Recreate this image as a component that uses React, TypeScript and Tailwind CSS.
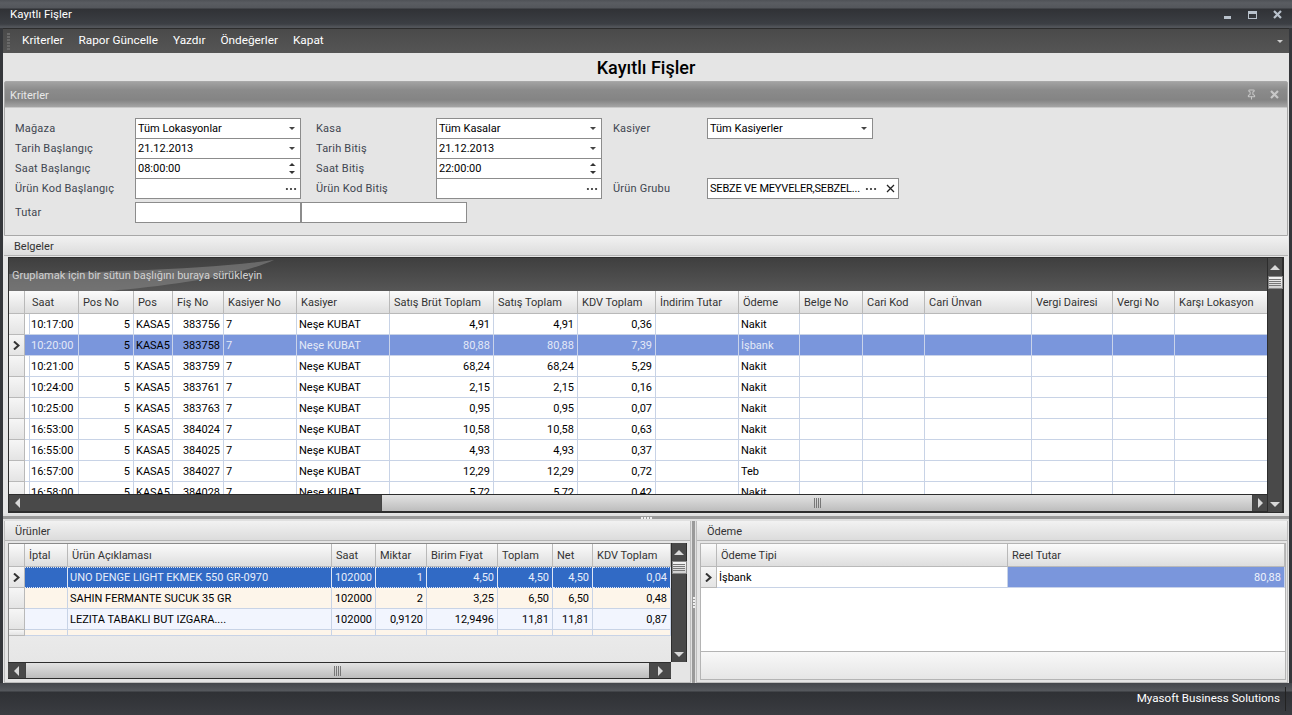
import { Ellipsis, Pin } from 'lucide-react'

const font = "font-['Roboto',sans-serif]"

const topCols = ['Saat', 'Pos No', 'Pos', 'Fiş No', 'Kasiyer No', 'Kasiyer', 'Satış Brüt Toplam', 'Satış Toplam', 'KDV Toplam', 'İndirim Tutar', 'Ödeme', 'Belge No', 'Cari Kod', 'Cari Ünvan', 'Vergi Dairesi', 'Vergi No', 'Karşı Lokasyon']
const topGrid = 'grid grid-cols-[16px_3px_51px_55px_39px_51px_73px_93px_104px_84px_78px_83px_61px_63px_62px_107px_81px_62px_93px]'

const topRows = [
  ['10:17:00', '383756', '4,91', '4,91', '0,36', 'Nakit'],
  ['10:20:00', '383758', '80,88', '80,88', '7,39', 'İşbank'],
  ['10:21:00', '383759', '68,24', '68,24', '5,29', 'Nakit'],
  ['10:24:00', '383761', '2,15', '2,15', '0,16', 'Nakit'],
  ['10:25:00', '383763', '0,95', '0,95', '0,07', 'Nakit'],
  ['16:53:00', '384024', '10,58', '10,58', '0,63', 'Nakit'],
  ['16:55:00', '384025', '4,93', '4,93', '0,37', 'Nakit'],
  ['16:57:00', '384027', '12,29', '12,29', '0,72', 'Teb'],
  ['16:58:00', '384028', '5,72', '5,72', '0,42', 'Nakit'],
]

const bottomCols = ['İptal', 'Ürün Açıklaması', 'Saat', 'Miktar', 'Birim Fiyat', 'Toplam', 'Net', 'KDV Toplam']
const bottomGrid = 'grid grid-cols-[16px_43px_264px_44px_51px_71px_55px_40px_78px]'

const bottomRows = [
  ['UNO DENGE LIGHT EKMEK 550 GR-0970', '102000', '1', '4,50', '4,50', '4,50', '0,04'],
  ['SAHIN FERMANTE SUCUK 35 GR', '102000', '2', '3,25', '6,50', '6,50', '0,48'],
  ['LEZITA TABAKLI BUT IZGARA....', '102000', '0,9120', '12,9496', '11,81', '11,81', '0,87'],
]

function Cross({ className = '', weight = 2.2 }: { className?: string; weight?: number }) {
  return (
    <svg width="9" height="9" viewBox="0 0 9 9" className={className}>
      <path d="M1 1L8 8M8 1L1 8" stroke="currentColor" strokeWidth={weight} fill="none" />
    </svg>
  )
}

function Caret() {
  return <span className="ml-auto mr-[5px] w-0 h-0 border-x-[3px] border-x-transparent border-t-[3px] border-t-[#444]" />
}

function Spin() {
  return (
    <span className="ml-auto mr-[5px] flex flex-col gap-[5px]">
      <span className="w-0 h-0 border-x-[3px] border-x-transparent border-b-[3px] border-b-[#333]" />
      <span className="w-0 h-0 border-x-[3px] border-x-transparent border-t-[3px] border-t-[#333]" />
    </span>
  )
}

function Dots() {
  return <Ellipsis size={14} strokeWidth={1.8} className="ml-auto mr-[2px] text-[#333] shrink-0" />
}

function Field({ value, width = 'w-[166px]', children }: { value?: string; width?: string; children?: React.ReactNode }) {
  return (
    <div className={`${width} h-[21px] -mb-px bg-white border border-[#8c8c8c] flex items-center pl-[2px] text-[11px] text-black shrink-0 whitespace-nowrap overflow-hidden`}>
      <span className="pt-px">{value}</span>
      {children}
    </div>
  )
}

function Label({ text, width }: { text: string; width: string }) {
  return <span className={`${width} pt-[3px] text-[11px] tracking-[0.2px] text-[#3f4650] shrink-0`}>{text}</span>
}

function TabHead({ text }: { text: string }) {
  return (
    <div className="h-[20px] shrink-0 flex items-center pl-[10px] pt-[3px] text-[11px] text-[#333] border-b border-[#b4b4b4] bg-gradient-to-b from-[#f2f2f2] to-[#dcdcdc]">
      {text}
    </div>
  )
}

function HeaderCell({ text }: { text?: string }) {
  return (
    <div className="h-[23px] flex items-center pl-[4px] pt-[2px] text-[11px] text-[#333] whitespace-nowrap overflow-hidden border-r border-b border-[#b9b9b9] bg-gradient-to-b from-[#fbfbfb] to-[#dedede]">
      {text}
    </div>
  )
}

function Indicator({ active, h = 'h-[21px]' }: { active?: boolean; h?: string }) {
  return (
    <div className={`${h} flex items-center justify-center border-r border-b border-[#b9b9b9] bg-gradient-to-b from-[#f6f6f6] to-[#e4e4e4]`}>
      {active && (
        <svg width="7" height="9" viewBox="0 0 7 9">
          <path d="M1 0.5 L5.5 4.5 L1 8.5" fill="none" stroke="#333" strokeWidth="2" />
        </svg>
      )}
    </div>
  )
}

function Cell({ text, right, className = '' }: { text?: string; right?: boolean; className?: string }) {
  return (
    <div className={`h-[21px] flex items-center px-[2px] pt-[2px] text-[11px] whitespace-nowrap overflow-hidden border-r border-b border-[#c8d3e6] ${right ? 'justify-end pr-[3px]' : ''} ${className}`}>
      {text}
    </div>
  )
}

function Grip({ vertical }: { vertical?: boolean }) {
  return (
    <span className={`flex gap-px ${vertical ? 'flex-col' : ''}`}>
      {[0, 1, 2, 3].map((i) => (
        <span key={i} className={vertical ? 'w-[12px] h-px bg-[#777]' : 'w-px h-[10px] bg-[#777]'} />
      ))}
    </span>
  )
}

function Arrow({ dir }: { dir: 'up' | 'down' | 'left' | 'right' }) {
  if (dir === 'up') return <span className="w-0 h-0 border-x-[5px] border-x-transparent border-b-[5px] border-b-[#d8d8d8]" />
  if (dir === 'down') return <span className="w-0 h-0 border-x-[5px] border-x-transparent border-t-[5px] border-t-[#d8d8d8]" />
  if (dir === 'left') return <span className="w-0 h-0 border-y-[5px] border-y-transparent border-r-[5px] border-r-[#d8d8d8]" />
  return <span className="w-0 h-0 border-y-[5px] border-y-transparent border-l-[5px] border-l-[#d8d8d8]" />
}

function VScroll() {
  return (
    <div className="w-[16px] shrink-0 bg-[#494949] border-x border-[#2d2d2d] flex flex-col items-center">
      <div className="h-[18px] shrink-0 flex items-center justify-center"><Arrow dir="up" /></div>
      <div className="w-[15px] h-[13px] shrink-0 flex items-center justify-center bg-gradient-to-b from-[#f5f5f5] to-[#cfcfcf] border border-[#888]">
        <Grip vertical />
      </div>
      <div className="flex-1" />
      <div className="h-[16px] shrink-0 flex items-center justify-center"><Arrow dir="down" /></div>
    </div>
  )
}

function TopHScroll() {
  return (
    <div className="h-[18px] shrink-0 flex bg-[#494949] border-y border-[#2d2d2d]">
      <div className="w-[16px] flex items-center justify-center"><Arrow dir="left" /></div>
      <div className="w-[356px]" />
      <div className="w-[872px] flex items-center justify-center bg-gradient-to-b from-[#e2e2e2] to-[#bdbdbd] border-x border-[#444]"><Grip /></div>
      <div className="flex-1 flex items-center justify-center"><Arrow dir="right" /></div>
    </div>
  )
}

function BottomHScroll() {
  return (
    <div className="h-[17px] w-[663px] shrink-0 flex bg-[#494949] border-y border-[#2d2d2d]">
      <div className="w-[17px] flex items-center justify-center"><Arrow dir="left" /></div>
      <div className="w-[625px] flex items-center justify-center bg-gradient-to-b from-[#e2e2e2] to-[#bdbdbd] border-x border-[#444]"><Grip /></div>
      <div className="flex-1 flex items-center justify-center"><Arrow dir="right" /></div>
    </div>
  )
}

export default function App() {
  return (
    <div className={`${font} w-[1292px] h-[715px] overflow-hidden flex flex-col bg-[#35373b]`}>
      {/* title bar */}
      <div className="h-[28px] shrink-0 flex items-center pl-[10px] pr-[10px] bg-[linear-gradient(#4f5257_0,#5a5d62_3px,#53565b_8px,#303236_9px,#3c3f44_24px,#52555a_27px)]">
        <span className="text-[11.5px] text-white mt-[2px]">Kayıtlı Fişler</span>
        <div className="ml-auto flex items-start text-[#b9c2cc]">
          <span className="w-[7px] h-[3px] mt-[6px] mr-[17px] bg-[#b9c2cc]" />
          <span className="w-[9px] h-[8px] mt-px mr-[16px] border border-t-[3px] border-[#b9c2cc]" />
          <Cross />
        </div>
      </div>

      <div className="flex-1 min-h-0 flex flex-col mx-[3px] bg-[#e5e5e5]">
        {/* toolbar */}
        <div className="h-[25px] shrink-0 flex items-center pl-[4px] pr-[6px] bg-gradient-to-b from-[#4a4a4a] to-[#555] border-t border-[#2d2d2d]">
          <span className="flex flex-col gap-px mr-[12px]">
            {[0, 1, 2, 3, 4, 5].map((i) => <span key={i} className="w-[3px] h-[2px] bg-[#6a6a6a]" />)}
          </span>
          <div className="flex gap-[15px] text-[11.8px] text-white">
            <span>Kriterler</span>
            <span>Rapor Güncelle</span>
            <span>Yazdır</span>
            <span>Öndeğerler</span>
            <span>Kapat</span>
          </div>
          <span className="ml-auto w-0 h-0 border-x-[3px] border-x-transparent border-t-[3px] border-t-[#ccc]" />
        </div>

        <div className="h-[28px] shrink-0 flex items-center justify-center text-[18px] font-medium text-black">Kayıtlı Fişler</div>

        {/* criteria */}
        <div className="h-[155px] shrink-0 mx-px border border-[#a8a8a8] rounded-t-[2px] flex flex-col">
          <div className="h-[26px] shrink-0 flex items-center pl-[5px] pr-[8px] text-[11px] text-[#e8e8e8] bg-[linear-gradient(#a2a2a2_0,#8b8b8b_8px,#848484_18px,#a5a5a5_25px)] border-b border-[#c8c8c8]">
            <span className="pt-[3px]">Kriterler</span>
            <Pin size={11} strokeWidth={2.2} className="ml-auto text-[#c8c8c8] mr-[13px]" />
            <Cross className="text-[#c8c8c8]" />
          </div>
          <div className="pl-[10px] pt-[10px] flex flex-col">
            <div className="flex items-center">
              <Label text="Mağaza" width="w-[120px]" />
              <Field value="Tüm Lokasyonlar"><Caret /></Field>
              <div className="w-[15px] shrink-0" />
              <Label text="Kasa" width="w-[120px]" />
              <Field value="Tüm Kasalar"><Caret /></Field>
              <div className="w-[11px] shrink-0" />
              <Label text="Kasiyer" width="w-[94px]" />
              <Field value="Tüm Kasiyerler"><Caret /></Field>
            </div>
            <div className="flex items-center">
              <Label text="Tarih Başlangıç" width="w-[120px]" />
              <Field value="21.12.2013"><Caret /></Field>
              <div className="w-[15px] shrink-0" />
              <Label text="Tarih Bitiş" width="w-[120px]" />
              <Field value="21.12.2013"><Caret /></Field>
            </div>
            <div className="flex items-center">
              <Label text="Saat Başlangıç" width="w-[120px]" />
              <Field value="08:00:00"><Spin /></Field>
              <div className="w-[15px] shrink-0" />
              <Label text="Saat Bitiş" width="w-[120px]" />
              <Field value="22:00:00"><Spin /></Field>
            </div>
            <div className="flex items-center">
              <Label text="Ürün Kod Başlangıç" width="w-[120px]" />
              <Field><Dots /></Field>
              <div className="w-[15px] shrink-0" />
              <Label text="Ürün Kod Bitiş" width="w-[120px]" />
              <Field><Dots /></Field>
              <div className="w-[11px] shrink-0" />
              <Label text="Ürün Grubu" width="w-[94px]" />
              <Field value="SEBZE VE MEYVELER,SEBZEL..." width="w-[192px] tracking-[-0.2px]">
                <Dots />
                <Cross weight={1.3} className="ml-[6px] mr-[3px] text-[#222] shrink-0" />
              </Field>
            </div>
            <div className="flex items-center mt-[4px]">
              <Label text="Tutar" width="w-[120px]" />
              <Field />
              <Field />
            </div>
          </div>
        </div>

        {/* documents grid */}
        <div className="h-[278px] shrink-0 mx-[1px] flex flex-col">
          <TabHead text="Belgeler" />
          <div className="flex-1 min-h-0 mx-[4px] mt-[1px] mb-[1px] border border-[#2d2d2d] flex bg-[#494949]">
            <div className="flex-1 min-w-0 flex flex-col">
              <div className="h-[33px] shrink-0 relative overflow-hidden flex items-center pl-[3px] pt-[3px] text-[11px] text-[#d2d2d2] bg-gradient-to-b from-[#3f3f3f] to-[#565656]">
                <svg className="absolute inset-0" width="400" height="33" viewBox="0 0 400 33">
                  <path d="M0 33 L0 16 C90 14 190 12 265 2 C230 18 160 28 100 33 Z" fill="#8a8a8a" opacity="0.55" />
                </svg>
                <span className="relative">Gruplamak için bir sütun başlığını buraya sürükleyin</span>
              </div>
              <div className="flex-1 min-h-0 overflow-hidden bg-white">
                <div className={topGrid}>
                  <HeaderCell />
                  <HeaderCell />
                  {topCols.map((c) => <HeaderCell key={c} text={c} />)}
                  {topRows.map((r, i) => {
                    const tone = i === 1 ? 'bg-[#7a96dc] border-[#c9d3ea]' : 'text-black'
                    const fade = i === 1 ? 'text-[#e4e9f7]' : ''
                    const dark = i === 1 ? 'text-black' : ''
                    return (
                      <div key={r[0]} className="contents">
                        <Indicator active={i === 1} />
                        <Cell className={tone} />
                        <Cell text={r[0]} className={`${tone} ${fade} pl-[3px]`} />
                        <Cell text="5" right className={`${tone} ${dark}`} />
                        <Cell text="KASA5" className={`${tone} ${dark}`} />
                        <Cell text={r[1]} right className={`${tone} ${dark}`} />
                        <Cell text="7" className={`${tone} ${fade}`} />
                        <Cell text="Neşe KUBAT" className={`${tone} ${fade}`} />
                        <Cell text={r[2]} right className={`${tone} ${fade}`} />
                        <Cell text={r[3]} right className={`${tone} ${fade}`} />
                        <Cell text={r[4]} right className={`${tone} ${fade}`} />
                        <Cell className={tone} />
                        <Cell text={r[5]} className={`${tone} ${fade}`} />
                        <Cell className={tone} />
                        <Cell className={tone} />
                        <Cell className={tone} />
                        <Cell className={tone} />
                        <Cell className={tone} />
                        <Cell className={tone} />
                      </div>
                    )
                  })}
                </div>
              </div>
              <TopHScroll />
            </div>
            <VScroll />
          </div>
        </div>

        {/* splitter */}
        <div className="h-[7px] shrink-0 flex items-center justify-center gap-px bg-[#9a9a9a] border-y-2 border-[#e0e0e0]">
          {[0, 1, 2, 3].map((i) => <span key={i} className="w-[2px] h-[2px] bg-[#eee]" />)}
        </div>

        {/* bottom panels */}
        <div className="flex-1 min-h-0 flex mx-[1px]">
          <div className="w-[687px] shrink-0 flex flex-col border-x border-b border-[#bdbdbd]">
            <TabHead text="Ürünler" />
            <div className="mx-[3px] mt-[2px] flex">
              <div className="w-[663px] shrink-0 h-[119px] flex flex-col bg-[linear-gradient(#f8f8f8,#e6e6e6)] overflow-hidden border-t border-l border-[#8a8a8a]">
                <div className={bottomGrid}>
                  <HeaderCell />
                  {bottomCols.map((c) => <HeaderCell key={c} text={c} />)}
                  {bottomRows.map((r, i) => {
                    const tone = i === 0
                      ? 'bg-[#316ac5] text-[#e8eefb] border-[#dfe7f6] border-t [border-top-style:dotted] [border-bottom-style:dotted]'
                      : i === 1 ? 'bg-[#fdf5ea] text-black' : 'bg-[#f2f5fe] text-black'
                    return (
                      <div key={r[0]} className="contents">
                        <Indicator active={i === 0} />
                        <Cell className={tone} />
                        <Cell text={r[0]} className={tone} />
                        <Cell text={r[1]} right className={tone} />
                        {r.slice(2).map((v, j) => <Cell key={j} text={v} right className={tone} />)}
                      </div>
                    )
                  })}
                  <Indicator h="h-[6px]" />
                  {[0, 1, 2, 3, 4, 5, 6, 7].map((i) => (
                    <div key={i} className="h-[6px] bg-[#fdf5ea] border-r border-b border-[#c8d3e6]" />
                  ))}
                </div>
              </div>
              <div className="h-[119px] flex"><VScroll /></div>
            </div>
            <div className="mx-[3px]">
              <BottomHScroll />
            </div>
          </div>

          {/* vertical splitter */}
          <div className="w-[5px] shrink-0 bg-[#9a9a9a] border-x border-[#e0e0e0] flex flex-col items-center justify-center gap-px">
            {[0, 1, 2, 3].map((i) => <span key={i} className="w-[2px] h-[2px] bg-[#eee]" />)}
          </div>

          <div className="flex-1 min-w-0 flex flex-col border-x border-b border-[#bdbdbd]">
            <TabHead text="Ödeme" />
            <div className="flex-1 min-h-0 ml-[3px] mr-[1px] mt-[2px] mb-[2px] border border-[#b4b4b4] flex flex-col bg-white">
              <div className="grid grid-cols-[16px_291px_1fr]">
                <HeaderCell />
                <HeaderCell text="Ödeme Tipi" />
                <HeaderCell text="Reel Tutar" />
                <Indicator active />
                <Cell text="İşbank" className="text-black" />
                <Cell text="80,88" right className="bg-[#7a96dc] text-[#eef2fb] border-[#c9d3ea]" />
              </div>
              <div className="flex-1" />
              <div className="h-[28px] shrink-0 border-t border-[#b4b4b4] bg-gradient-to-b from-[#f8f8f8] to-[#e6e6e6]" />
            </div>
          </div>
        </div>
      </div>

      {/* status bar */}
      <div className="h-[32px] shrink-0 flex items-center justify-end pr-[6px] text-[11.6px] text-white bg-[linear-gradient(#43464b_0,#55585d_8px,#2f3135_9px,#3a3c41_32px)]">
        <span>Myasoft Business Solutions</span>
        <span className="ml-[5px] w-px h-[24px] bg-[#222]" />
      </div>
    </div>
  )
}
